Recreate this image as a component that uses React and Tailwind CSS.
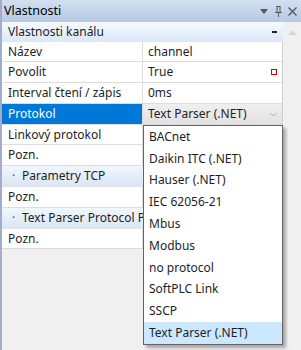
const rows = [
  { name: 'Název', value: 'channel', h: 'h-[20px]' },
  { name: 'Povolit', value: 'True', h: 'h-[21px]', flag: true },
  { name: 'Interval čtení / zápis', value: '0ms', h: 'h-[21px]' },
  { name: 'Protokol', value: 'Text Parser (.NET)', h: 'h-[21px]', selected: true },
  { name: 'Linkový protokol', value: '', h: 'h-[20px]' },
  { name: 'Pozn.', value: '', h: 'h-[21px]' },
  { name: 'Parametry TCP', h: 'h-[21px]', group: true },
  { name: 'Pozn.', value: '', h: 'h-[21px]' },
  { name: 'Text Parser Protocol Pa', h: 'h-[21px]', group: true },
  { name: 'Pozn.', value: '', h: 'h-[20px]' },
];

const options = [
  'BACnet',
  'Daikin ITC (.NET)',
  'Hauser (.NET)',
  'IEC 62056-21',
  'Mbus',
  'Modbus',
  'no protocol',
  'SoftPLC Link',
  'SSCP',
  'Text Parser (.NET)',
];

function Row({ row }) {
  if (row.group) {
    return (
      <div className={`${row.h} flex items-center bg-gradient-to-b from-[#f1f6fc] to-[#d9e6f6] border-b border-[#e3e3e3]`}>
        <div className="w-[141px] flex items-center overflow-hidden leading-[16px]">
          <span className="w-[20px] shrink-0 pl-[10px] text-[#555]">·</span>
          <span className="whitespace-nowrap">{row.name}</span>
        </div>
      </div>
    );
  }
  return (
    <div className={`${row.h} flex border-b border-[#dcdcdc]`}>
      <div
        className={`w-[141px] shrink-0 flex items-center pl-[6px] border-r border-[#dcdcdc] whitespace-nowrap ${
          row.selected ? 'bg-[#0078d7] text-white' : 'bg-white'
        }`}
      >
        {row.name}
      </div>
      <div
        className={`flex-1 flex items-center pl-[5px] pr-[5px] ${
          row.selected ? 'bg-gradient-to-b from-[#efefef] to-[#e2e2e2]' : 'bg-white'
        }`}
      >
        <span className="flex-1 whitespace-nowrap">{row.value}</span>
        {row.flag && <span className="w-[6px] h-[6px] border border-[#e00000]" />}
        {row.selected && (
          <svg width="7" height="5" viewBox="0 0 7 5">
            <path d="M0.5 1 L3.5 4 L6.5 1" fill="none" stroke="#a8a8a8" strokeWidth="1" />
          </svg>
        )}
      </div>
    </div>
  );
}

export default function App() {
  return (
    <div className="relative w-[301px] h-[350px] overflow-hidden bg-[#f0f0f0] border-l-2 border-[#a3adc9] text-[12px] text-[#1e1e1e] font-['Segoe_UI','Noto_Sans',sans-serif] leading-none">
      <div className="h-[22px] flex items-center pl-[2px] pr-[4px] bg-gradient-to-b from-[#d2dff0] to-[#b6c9e4] text-black">
        <span className="flex-1 text-[12.5px]">Vlastnosti</span>
        <svg width="8" height="5" viewBox="0 0 8 5" className="mr-[7px]">
          <path d="M0 0 H8 L4 5 Z" fill="#555" />
        </svg>
        <svg width="7" height="11" viewBox="0 0 7 11" className="mr-[6px]">
          <path d="M1.5 0.5 H5.5 M2 0.5 V6 M5 0.5 V6 M0 6.5 H7 M3.5 7 V11" fill="none" stroke="#555" strokeWidth="1" />
        </svg>
        <svg width="9" height="9" viewBox="0 0 9 9">
          <path d="M0.5 0.5 L8.5 8.5 M8.5 0.5 L0.5 8.5" fill="none" stroke="#555" strokeWidth="1.3" />
        </svg>
      </div>
      <div className="flex">
        <div className="w-[281px] shrink-0">
          <div className="h-[20px] flex items-center pl-[6px] pr-[6px] bg-gradient-to-b from-[#f6faff] to-[#d9e7f7]">
            <span className="flex-1">Vlastnosti kanálu</span>
            <span className="w-[5px] h-[2px] bg-[#222]" />
          </div>
          <div className="border-r border-[#cfcfcf]">
            {rows.map((row, i) => (
              <Row key={i} row={row} />
            ))}
          </div>
        </div>
        <div className="w-[18px] flex justify-center pt-[8px]">
          <svg width="9" height="5" viewBox="0 0 9 5">
            <path d="M0 5 L4.5 0 L9 5 Z" fill="#d6d6d6" />
          </svg>
        </div>
      </div>
      <div className="absolute left-[141px] top-[125px] w-[140px] bg-white border border-[#646464] shadow-[3px_3px_3px_rgba(0,0,0,0.3)]">
        {options.map((opt, i) => (
          <div
            key={opt}
            className={`h-[21.8px] flex items-center pl-[5px] whitespace-nowrap ${
              i === options.length - 1 ? 'bg-[#cce8ff]' : ''
            }`}
          >
            {opt}
          </div>
        ))}
      </div>
    </div>
  );
}
